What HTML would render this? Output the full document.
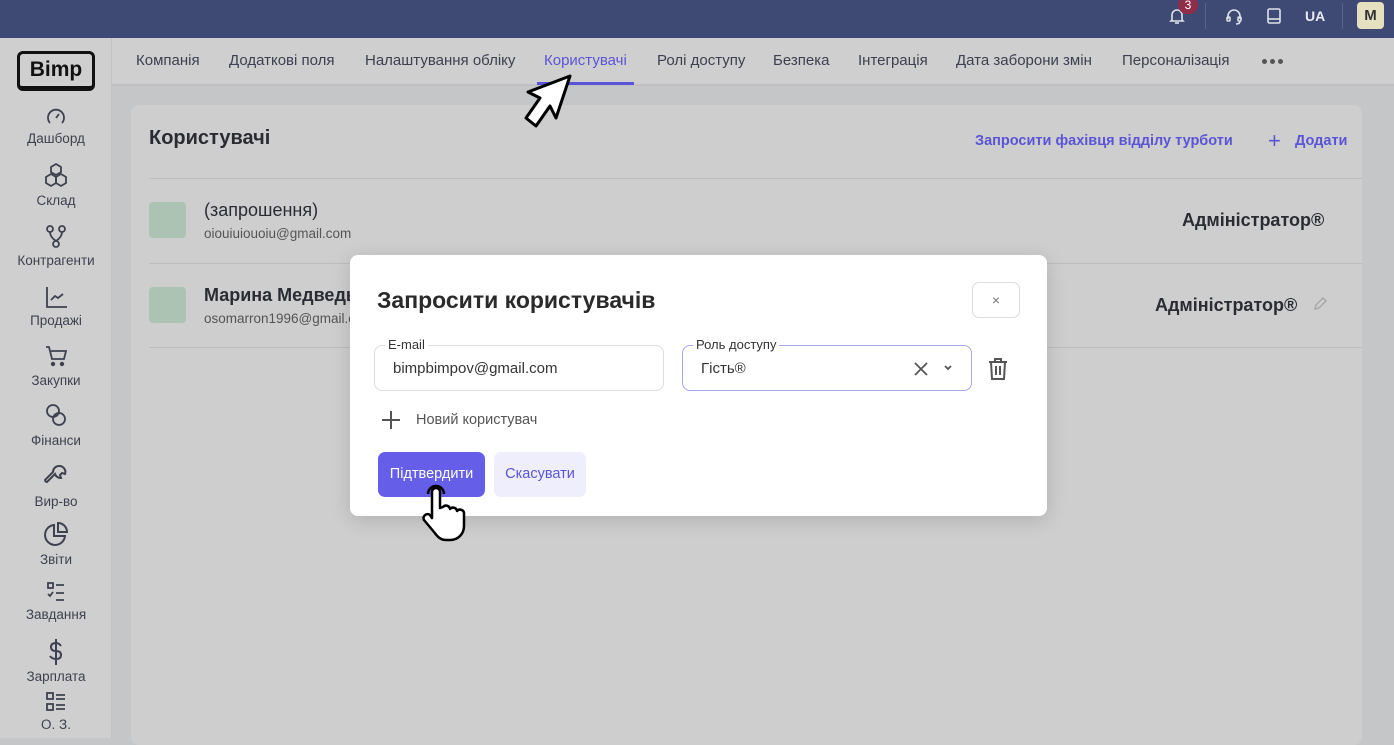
<!DOCTYPE html>
<html><head><meta charset="utf-8"><style>
*{box-sizing:border-box;margin:0;padding:0}
body{width:1394px;height:738px;overflow:hidden;font-family:"Liberation Sans",sans-serif;background:#c5c6c8;position:relative;color:#2a2c33}
.top{position:absolute;left:0;top:0;width:1394px;height:38px;background:#3e4a74}
.side{position:absolute;left:0;top:38px;width:112px;height:700px;background:#cfcfcf;border-right:1px solid #c2c2c2}
.tabs{position:absolute;left:112px;top:38px;width:1282px;height:48px;background:#cfcfcf;border-bottom:2px solid #c0c0c2}
.tabs span{position:absolute;top:14px;font-size:15px;color:#3c4050}
.card{position:absolute;left:131px;top:105px;width:1231px;height:640px;background:#cecece;border-radius:8px}
.si{position:absolute;width:112px;text-align:center;font-size:13.5px;color:#3e4250}
.si svg{display:block;margin:0 auto 3px}
.modal{position:absolute;left:350px;top:255px;width:697px;height:261px;background:#fff;border-radius:8px;box-shadow:0 4px 20px rgba(0,0,0,.15)}
.inp{position:absolute;height:46px;border:1px solid #ddd;border-radius:8px;font-size:15px;color:#333}
.lab{position:absolute;top:-9px;left:10px;background:#fff;padding:0 3px;font-size:13px;color:#333}
</style></head><body>
<div class="top">
 <svg style="position:absolute;left:1167px;top:6px" width="20" height="20" viewBox="0 0 20 20" fill="none" stroke="#dfe2ea" stroke-width="1.6"><path d="M5 14V9a5 5 0 0110 0v5l1 1H4z"/><path d="M8 17h4"/></svg>
 <div style="position:absolute;left:1178px;top:-4px;width:20px;height:18px;border-radius:9px;background:#8f2e4a;color:#fff;font-size:12px;text-align:center;line-height:18px">3</div>
 <div style="position:absolute;left:1205px;top:3px;width:1px;height:26px;background:#5a6388"></div>
 <svg style="position:absolute;left:1224px;top:6px" width="20" height="20" viewBox="0 0 20 20" fill="none" stroke="#dfe2ea" stroke-width="1.6"><path d="M4 13V10a6 6 0 0112 0v3"/><rect x="3" y="11" width="3" height="4" rx="1"/><rect x="14" y="11" width="3" height="4" rx="1"/><path d="M16 15q0 3-4 3"/></svg>
 <svg style="position:absolute;left:1264px;top:6px" width="20" height="20" viewBox="0 0 20 20" fill="none" stroke="#dfe2ea" stroke-width="1.6"><rect x="4" y="3" width="12" height="14" rx="1.5"/><path d="M4 13h12"/></svg>
 <div style="position:absolute;left:1305px;top:8px;color:#e8eaf0;font-weight:bold;font-size:14px">UA</div>
 <div style="position:absolute;left:1342px;top:3px;width:1px;height:26px;background:#5a6388"></div>
 <div style="position:absolute;left:1357px;top:2px;width:27px;height:27px;border-radius:4px;background:#e4e0c0;color:#333;font-weight:bold;font-size:15px;text-align:center;line-height:27px">M</div>
</div>
<div class="side">
 <div style="position:absolute;left:17px;top:13px;width:78px;height:40px;border:3px solid #111;border-radius:6px;border-bottom-width:5px;font-weight:bold;font-size:21px;text-align:center;line-height:32px;color:#111">Bimp</div>
 <div class="si" style="top:66px"><svg width="24" height="24" viewBox="0 0 24 24" fill="none" stroke="#3e4250" stroke-width="1.8"><path d="M6 19a8 8 0 1112 0"/><path d="M12 14l3-4"/></svg>Дашборд</div>
 <div class="si" style="top:124px"><svg width="26" height="28" viewBox="0 0 26 28" fill="none" stroke="#3e4250" stroke-width="1.8"><path d="M13 2l5 3v5l-5 3-5-3V5z"/><path d="M8 12l5 3v6l-5 3-5-3v-6z"/><path d="M18 12l5 3v6l-5 3-5-3v-6z"/></svg>Склад</div>
 <div class="si" style="top:186px"><svg width="24" height="26" viewBox="0 0 24 26" fill="none" stroke="#3e4250" stroke-width="1.8"><circle cx="6" cy="5" r="3"/><circle cx="18" cy="5" r="3"/><circle cx="12" cy="20" r="3"/><path d="M6 8q0 5 6 9M18 8q0 5-6 9"/></svg>Контрагенти</div>
 <div class="si" style="top:246px"><svg width="24" height="26" viewBox="0 0 24 26" fill="none" stroke="#3e4250" stroke-width="1.8"><path d="M3 3v20h20"/><path d="M7 16l4-4 3 2 5-4"/></svg>Продажі</div>
 <div class="si" style="top:306px"><svg width="24" height="26" viewBox="0 0 24 26" fill="none" stroke="#3e4250" stroke-width="1.8"><path d="M2 3h3l3 12h12l2-8H7"/><circle cx="9" cy="20" r="1.3" fill="#3e4250"/><circle cx="18" cy="20" r="1.3" fill="#3e4250"/></svg>Закупки</div>
 <div class="si" style="top:364px"><svg width="24" height="28" viewBox="0 0 24 28" fill="none" stroke="#3e4250" stroke-width="1.8"><circle cx="9" cy="9" r="6"/><circle cx="15" cy="17" r="6"/></svg>Фінанси</div>
 <div class="si" style="top:425px"><svg width="26" height="28" viewBox="0 0 26 28" fill="none" stroke="#3e4250" stroke-width="2"><path d="M16 3a6 6 0 016 8l-3-1-2 2 1 3a6 6 0 01-6-4L4 19a2 2 0 01-2-2l8-8a6 6 0 016-6z"/></svg>Вир-во</div>
 <div class="si" style="top:483px"><svg width="26" height="28" viewBox="0 0 26 28" fill="none" stroke="#3e4250" stroke-width="2"><path d="M11 4a10 10 0 1011 11H11z"/><path d="M15 2v9h9a9 9 0 00-9-9z"/></svg>Звіти</div>
 <div class="si" style="top:542px"><svg width="24" height="24" viewBox="0 0 24 24" fill="none" stroke="#3e4250" stroke-width="1.8"><rect x="4" y="3" width="5" height="5"/><path d="M12 5h8M12 13h8M12 20h8M4 14l2 2 3-4"/></svg>Завдання</div>
 <div class="si" style="top:600px"><svg width="24" height="28" viewBox="0 0 24 28" fill="none" stroke="#3e4250" stroke-width="2"><path d="M17 8q-2-3-5-3-5 0-5 4t5 4 5 4-5 4q-4 0-6-3M12 1v26"/></svg>Зарплата</div>
 <div class="si" style="top:652px"><svg width="24" height="24" viewBox="0 0 24 24" fill="none" stroke="#3e4250" stroke-width="1.8"><rect x="3" y="3" width="6" height="6"/><rect x="3" y="14" width="6" height="6"/><path d="M12 5h9M12 9h9M12 15h9M12 19h9"/></svg>О. З.</div>
</div>
<div class="tabs">
 <span style="left:24px">Компанія</span><span style="left:117px">Додаткові поля</span><span style="left:253px">Налаштування обліку</span>
 <span style="left:432px;color:#5a55d6">Користувачі</span>
 <div style="position:absolute;left:425px;top:44px;width:97px;height:3px;background:#5a55d6"></div>
 <span style="left:545px">Ролі доступу</span><span style="left:661px">Безпека</span><span style="left:746px">Інтеграція</span><span style="left:844px">Дата заборони змін</span><span style="left:1010px">Персоналізація</span>
 <div style="position:absolute;left:1150px;top:21px;width:5px;height:5px;border-radius:3px;background:#555;box-shadow:8px 0 #555,16px 0 #555"></div>
</div>
<div class="card">
 <div style="position:absolute;left:18px;top:22px;font-size:20px;font-weight:bold">Користувачі</div>
 <div style="position:absolute;left:844px;top:28px;font-size:14.5px;color:#5a55d6;font-weight:bold">Запросити фахівця відділу турботи</div>
 <div style="position:absolute;left:1137px;top:23px;font-size:22px;color:#5a55d6">+</div>
 <div style="position:absolute;left:1164px;top:28px;font-size:14.5px;color:#5a55d6;font-weight:bold">Додати</div>
 <div style="position:absolute;left:18px;top:73px;width:1214px;height:1px;background:#bdbdbd"></div>
 <div style="position:absolute;left:18px;top:97px;width:37px;height:36px;border-radius:4px;background:#acc3b4"></div>
 <div style="position:absolute;left:73px;top:95px;font-size:18px">(запрошення)</div>
 <div style="position:absolute;left:73px;top:121px;font-size:13.5px;color:#555">oiouiuiouoiu@gmail.com</div>
 <div style="position:absolute;left:1051px;top:105px;font-size:18px;font-weight:bold;color:#2a2c33">Адміністратор®</div>
 <div style="position:absolute;left:18px;top:158px;width:1214px;height:1px;background:#bdbdbd"></div>
 <div style="position:absolute;left:18px;top:182px;width:37px;height:36px;border-radius:4px;background:#acc3b4"></div>
 <div style="position:absolute;left:73px;top:180px;font-size:18px;font-weight:bold">Марина Медведь</div>
 <div style="position:absolute;left:73px;top:206px;font-size:13.5px;color:#555">osomarron1996@gmail.com</div>
 <div style="position:absolute;left:1024px;top:190px;font-size:18px;font-weight:bold">Адміністратор®</div>
 <svg style="position:absolute;left:1181px;top:191px" width="16" height="16" viewBox="0 0 16 16" fill="none" stroke="#a8a8a8" stroke-width="1.5"><path d="M3 13l1-4 7-7 3 3-7 7z"/></svg>
 <div style="position:absolute;left:18px;top:242px;width:1214px;height:1px;background:#bdbdbd"></div>
</div>
<div style="position:absolute;left:1362px;top:86px;width:32px;height:652px;background:#c5c6c8"></div>
<div class="modal">
 <div style="position:absolute;left:27px;top:32px;font-size:23px;font-weight:bold;color:#2a2a2a">Запросити користувачів</div>
 <div style="position:absolute;left:622px;top:27px;width:48px;height:36px;border:1px solid #ddd;border-radius:7px;text-align:center;line-height:34px;color:#777;font-size:14px">×</div>
 <div class="inp" style="left:24px;top:90px;width:290px"><div class="lab">E-mail</div><div style="position:absolute;left:18px;top:14px">bimpbimpov@gmail.com</div></div>
 <div class="inp" style="left:332px;top:90px;width:290px;border-color:#a9a4ee"><div class="lab">Роль доступу</div><div style="position:absolute;left:18px;top:14px">Гість®</div>
  <svg style="position:absolute;left:230px;top:15px" width="16" height="16" viewBox="0 0 16 16" stroke="#555" stroke-width="1.8"><path d="M2 2l12 12M14 2L2 14"/></svg>
  <svg style="position:absolute;left:260px;top:18px" width="10" height="8" viewBox="0 0 10 8" fill="none" stroke="#555" stroke-width="1.8"><path d="M2 2l3 3 3-3"/></svg></div>
 <svg style="position:absolute;left:636px;top:101px" width="24" height="26" viewBox="0 0 24 26" fill="none" stroke="#555" stroke-width="2"><path d="M3 6h18M9 6V3h6v3M5 6l1 17h12l1-17M10 10v9M14 10v9"/></svg>
 <svg style="position:absolute;left:31px;top:155px" width="20" height="20" viewBox="0 0 20 20" stroke="#555" stroke-width="2"><path d="M10 1v18M1 10h18"/></svg>
 <div style="position:absolute;left:66px;top:157px;font-size:14.5px;color:#555">Новий користувач</div>
 <div style="position:absolute;left:28px;top:197px;width:107px;height:45px;border-radius:7px;background:#645ee9;color:#fff;font-size:14.5px;text-align:center;line-height:45px;padding-top:0">Підтвердити</div>
 <div style="position:absolute;left:144px;top:197px;width:92px;height:45px;border-radius:7px;background:#efeefc;color:#5a55d6;font-size:14.5px;text-align:center;line-height:45px">Скасувати</div>
</div>
<svg style="position:absolute;left:520px;top:72px" width="54" height="56" viewBox="0 0 54 56"><path d="M50 4L8 20l12 6-14 20 10 8 14-20 6 12z" fill="#fff" stroke="#000" stroke-width="3" stroke-linejoin="round"/></svg>
<svg style="position:absolute;left:420px;top:484px" width="52" height="58" viewBox="0 0 52 58"><path d="M12 8a4 4 0 018 0v16l3-1a4 4 0 017 2 4 4 0 017 2 4 4 0 017 3v12c0 8-6 14-14 14h-4c-6 0-9-4-12-8L4 36a4 4 0 016-5l2 3z" fill="#fff" stroke="#000" stroke-width="2.5" stroke-linejoin="round"/><path d="M8 10a8 8 0 0116 0" fill="none" stroke="#000" stroke-width="2.5"/></svg>
</body></html>
